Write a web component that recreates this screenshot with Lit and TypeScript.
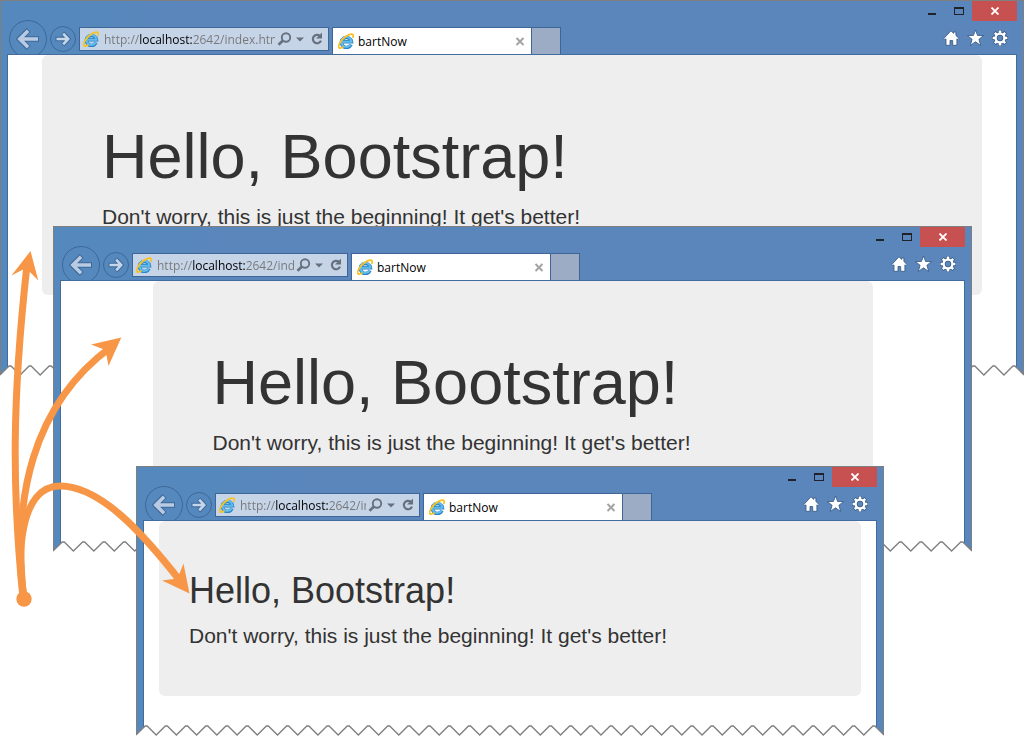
import { LitElement, html, css, svg } from "lit";
import { customElement, property } from "lit/decorators.js";

const ieLogo = html`
  <svg class="ie" viewBox="0 0 16 16" width="16" height="16" fill="none" aria-hidden="true">
    <path d="M3.600 8.700H13.400A5 5 0 1 0 13 11.600" stroke="#2b84c6" stroke-width="3.500" />
    <path d="M3.600 8.700H13.400A5 5 0 1 0 12.600 11.600" stroke="#62bdec" stroke-width="2" />
    <path
      d="M15 4.200C15.600 2 14.900.900 13.200 1.100 9.800 1.500 4.800 5.100 2.400 9.100.800 11.800.300 14.300 1.300 14.900c.800.500 2.100.100 3.500-.800"
      stroke="#f8c322" stroke-width="1.800" stroke-linecap="round" />
  </svg>`;

@customElement("browser-window")
export class BrowserWindow extends LitElement {
  @property({ type: Number }) teeth = 50;
  @property() name = "";

  static styles = css`
    :host {
      display: block;
      position: relative;
      box-sizing: border-box;
      border: 1px solid #7f7f7f;
      border-bottom: 0;
      background: linear-gradient(90deg, #5588bc 0, #5588bc 80px, #5b86bc 180px);
      font-family: "Open Sans", "Noto Sans", sans-serif;
    }
    button {
      display: grid;
      place-items: center;
      border: 0;
      padding: 0;
      margin: 0;
      background: none;
      box-sizing: border-box;
    }
    svg {
      display: block;
      flex: none;
    }
    .bar {
      display: flex;
      height: 53px;
      overflow: hidden;
      padding: 0 6px 0 8px;
    }
    .nav {
      display: flex;
      align-items: center;
      gap: 3px;
      height: 38px;
      margin-top: 19px;
    }
    .round {
      border: 1px solid #3e6898;
      border-radius: 50%;
      width: 26px;
      height: 26px;
    }
    .big {
      width: 38px;
      height: 38px;
    }
    .address {
      display: flex;
      align-items: center;
      box-sizing: border-box;
      width: var(--address, 250px);
      height: 24px;
      padding: 0 1px 0 3px;
      border: 1px solid #3e6595;
      background: #c6d4e8;
    }
    .url {
      flex: 1;
      min-width: 0;
      margin: 0 2px 0 5px;
      padding: 0;
      border: 0;
      outline: 0;
      height: 20px;
      font: 12px "Open Sans", "Noto Sans", sans-serif;
      color: #777777;
      background: linear-gradient(90deg, #777 0 36px, #000 36px 88px, #777 88px);
      -webkit-background-clip: text;
      background-clip: text;
      -webkit-text-fill-color: transparent;
    }
    .tabs {
      display: flex;
      margin: 26px 0 0 3px;
    }
    .tab {
      display: flex;
      align-items: center;
      box-sizing: border-box;
      width: 200px;
      height: 27px;
      padding: 0 5px;
      border: 1px solid #3e6595;
      border-bottom: 0;
      background: #fff;
      color: #000;
      font-size: 12px;
    }
    .title {
      flex: 1;
      margin-left: 4px;
    }
    .close-tab {
      width: 12px;
      height: 12px;
    }
    .new-tab {
      width: 29px;
      height: 27px;
      border: 1px solid #3e6595;
      border-width: 1px 1px 0 0;
      background: #9bacc4;
    }
    .side {
      display: flex;
      flex-direction: column;
      align-items: flex-end;
      margin-left: auto;
    }
    .controls,
    .tools {
      display: flex;
    }
    .control {
      width: 27px;
      height: 20px;
    }
    .close {
      width: 45px;
      background: #c75050;
    }
    .tools {
      margin: 5px 5px 0 0;
    }
    .tool {
      width: 24px;
      height: 24px;
    }
    .page {
      margin: 0 6px;
      border: 1px solid #426c9f;
      border-bottom: 0;
      background: #fff;
      padding: 0 15px var(--tail, 40px);
    }
    .torn {
      position: absolute;
      left: -1px;
      bottom: 0;
      width: calc(100% + 2px);
      height: 11px;
    }
  `;

  private torn() {
    const points: string[] = [];
    for (let i = 0; i < this.teeth; i++) {
      const x = i * 20;
      points.push(`${x},10`, `${x + 9},1`, `${x + 11},1`);
    }
    const end = this.teeth * 20;
    points.push(`${end},10`);
    const line = points.join(" ");
    return html`<svg class="torn" viewBox="0 0 ${end} 11" preserveAspectRatio="none" aria-hidden="true">
      ${svg`<polygon points="0,11 ${line} ${end},11" fill="#fff"></polygon>
      <polyline points=${line} fill="none" stroke="#7f7f7f" stroke-width="1.3" vector-effect="non-scaling-stroke"></polyline>`}
    </svg>`;
  }

  render() {
    return html`
      <header class="bar">
        <div class="nav">
          <button class="round big" aria-label="Back">
            <svg width="24" height="22" viewBox="0 0 24 22" fill="none">
              <path d="M12.600 2L3.600 11l9 9M4 11H23" stroke="#3e6898" stroke-width="5.600" />
              <path d="M12.100 2.700L3.800 11l8.300 8.300M4 11H22" stroke="#b9cbe3" stroke-width="3.600" />
            </svg>
          </button>
          <button class="round" aria-label="Forward">
            <svg width="16" height="16" viewBox="0 0 16 16" fill="none">
              <path d="M7.800 2l5.500 6-5.500 6M.500 8H13" stroke="#3e6898" stroke-width="4.400" />
              <path d="M8.200 2.600L13.200 8l-5 5.400M1.500 8H13" stroke="#c6d6ea" stroke-width="2.600" />
            </svg>
          </button>
          <div class="address">
            ${ieLogo}
            <input class="url" aria-label="Address" .value=${"http://localhost:2642/index.htm"} />
            <svg width="50" height="16" viewBox="0 0 50 16" fill="none" stroke="#67707e">
              <circle cx="9" cy="6.500" r="4.200" stroke-width="1.900" />
              <path d="M6 9.500L1.500 13.800" stroke-width="2.600" />
              <path d="M19 6.500h8l-4 4z" fill="#67707e" stroke="none" />
              <path d="M42.800 4.800A4.200 4.200 0 1 0 44 9.600" stroke-width="2.200" />
              <path d="M45 1.500v6h-6z" fill="#67707e" stroke="none" />
            </svg>
          </div>
        </div>
        <div class="tabs">
          <div class="tab">
            ${ieLogo}
            <span class="title">${this.name}</span>
            <button class="close-tab" aria-label="Close tab">
              <svg width="10" height="9" viewBox="0 0 10 9"><path d="M1.500 1l7 7M8.500 1l-7 7" stroke="#a3a3a3" stroke-width="2" /></svg>
            </button>
          </div>
          <button class="new-tab" aria-label="New tab"></button>
        </div>
        <div class="side">
          <div class="controls">
            <button class="control" aria-label="Minimize">
              <svg width="12" height="12" viewBox="0 0 12 12"><path d="M2 8h8v2H2z" fill="#1f2329" /></svg>
            </button>
            <button class="control" aria-label="Maximize">
              <svg width="11" height="9" viewBox="0 0 11 9">
                <path d="M1 0h10v8H1zM2 2v5h8V2z" fill="#1f2329" fill-rule="evenodd" />
              </svg>
            </button>
            <button class="control close" aria-label="Close">
              <svg width="9" height="8" viewBox="0 0 9 8"><path d="M1.500 .5l7 7M8.500 .5l-7 7" stroke="#fff" stroke-width="1.800" /></svg>
            </button>
          </div>
          <div class="tools">
            <button class="tool" aria-label="Home">
              <svg width="18" height="18" viewBox="0 0 18 18">
                <path d="M8 1.800l2.700 2.600V3h2.200v3.500L16 9.500l-1.100 1.200-1-.9V16.300H9.700V11.500H7V16.300H3V9.800l-1 .9L.800 9.500z"
                  fill="#fff" stroke="#33557f" stroke-width=".8" />
              </svg>
            </button>
            <button class="tool" aria-label="Favorites">
              <svg width="18" height="18" viewBox="0 0 18 18">
                <path d="M8.500 1l2.100 5.500h6l-4.700 3.800 1.800 6.200-5.200-3.700-5.200 3.700 1.800-6.200L.400 6.500h6z"
                  fill="#fff" stroke="#33557f" stroke-width=".8" />
              </svg>
            </button>
            <button class="tool" aria-label="Tools">
              <svg width="18" height="18" viewBox="0 0 18 18">
                <g stroke="#33557f" stroke-width="3.800">
                  <path d="M9 1v16M1 9h16M3.400 3.400l11.200 11.200M14.600 3.400L3.400 14.600" />
                </g>
                <circle cx="9" cy="9" r="6.200" fill="#33557f" />
                <path d="M9 1.600v14.800M1.600 9h14.800M3.800 3.800l10.400 10.400M14.200 3.800L3.800 14.200" stroke="#fff" stroke-width="2.600" />
                <circle cx="9" cy="9" r="4.300" fill="#5b86bc" stroke="#fff" stroke-width="2.500" />
                <circle cx="9" cy="9" r="2.900" fill="#5b86bc" stroke="#33557f" stroke-width=".7" />
              </svg>
            </button>
          </div>
        </div>
      </header>
      <main class="page"><slot></slot></main>
      ${this.torn()}
    `;
  }
}

@customElement("hello-jumbotron")
export class HelloJumbotron extends LitElement {
  @property({ type: Boolean, reflect: true }) compact = false;

  static styles = css`
    :host {
      display: block;
      box-sizing: border-box;
      margin: 0 auto;
      padding: 48px 60px;
      border-radius: 6px;
      background: #eeeeee;
      color: #333333;
      font-family: "Liberation Sans", Arial, sans-serif;
      white-space: nowrap;
    }
    :host([compact]) {
      padding: 30px;
    }
    .heading {
      margin: 0;
      padding: 20px 0 12px;
      font-size: 63px;
      font-weight: 400;
      line-height: 67px;
    }
    :host([compact]) .heading {
      padding-bottom: 10px;
      font-size: 36px;
      line-height: 40px;
    }
    .lead {
      margin: 0;
      padding-bottom: 15px;
      font-size: 21px;
      line-height: 30px;
    }
  `;

  render() {
    return html`
      <h1 class="heading">Hello, Bootstrap!</h1>
      <p class="lead">Don't worry, this is just the beginning! It get's better!</p>
    `;
  }
}

@customElement("app-root")
export class AppRoot extends LitElement {
  static styles = css`
    :host {
      display: block;
      position: relative;
      min-height: 100vh;
      background: #fff;
      overflow: hidden;
    }
    .window {
      position: absolute;
    }
    .wide {
      top: 0;
      left: 0;
      right: 0;
      --address: 250px;
      --tail: 81px;
    }
    .medium {
      top: 226px;
      left: 53px;
      right: 52px;
      --address: 216px;
      --tail: 31px;
    }
    .narrow {
      top: 466px;
      left: 136px;
      right: 140px;
      --address: 205px;
      --tail: 40px;
    }
    .wide-hero {
      max-width: 940px;
    }
    .medium-hero {
      max-width: 720px;
    }
    .arrows {
      position: absolute;
      top: 0;
      left: 0;
      pointer-events: none;
    }
  `;

  render() {
    return html`
      <browser-window class="window wide" name="bartNow" teeth="51">
        <hello-jumbotron class="wide-hero"></hello-jumbotron>
      </browser-window>
      <browser-window class="window medium" name="bartNow" teeth="45">
        <hello-jumbotron class="medium-hero"></hello-jumbotron>
      </browser-window>
      <browser-window class="window narrow" name="bartNow" teeth="37">
        <hello-jumbotron compact></hello-jumbotron>
      </browser-window>
      <svg class="arrows" width="220" height="620" viewBox="0 0 220 620" aria-hidden="true">
        <g fill="none" stroke="#f79646" stroke-width="7">
          <path d="M23 598C12 490 12 400 27 265" />
          <path d="M24 599C12 500 32 405 111 347" />
          <path d="M24 599C16 555 20 486 60 486C100 486 142 532 181 582" />
        </g>
        <g fill="#f79646">
          <circle cx="24" cy="599" r="7.700" />
          <path d="M30.500 251L11.500 275.500 26 268 38.300 280.500z" />
          <path d="M121.300 337.500L91 344.500 105.500 350 108.500 366z" />
          <path d="M189.500 593.500L183.500 563.500 177.500 578.500 162 580.500z" />
        </g>
      </svg>
    `;
  }
}
